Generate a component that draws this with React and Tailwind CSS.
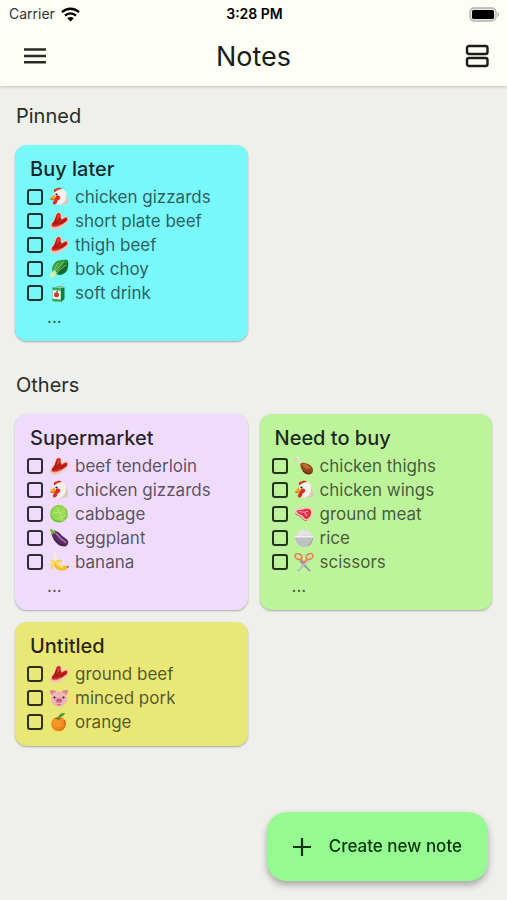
import React from "react";

const meat = (
  <>
    <path d="M1 13.500C3 11 5 9 6 5c.5-2.500 2-4 4-3.800C12.500 1.300 13 3 12.500 5.500L13 7c2-.5 3.500-2.500 5.500-1.500 1.200 1 1 3.500.3 5.500-2 2.500-4.500 3.500-6.500 5.500-2 1.500-5 2.500-8 2.300C2 18 1 16 1 13.500z" fill="#f5c4bb" />
    <path d="M3 12.500C5 10.500 6.300 8 7 5c.5-2 2-3.200 3.500-2.800C12 2.800 11.800 4.500 11.500 6l1 2.500C14.500 8 16 6 17.800 6.500c.8 1 .5 2.500 0 3.500-2 2-4.500 3-6.300 4.500-2 1.200-5 2-7.500 1.300-1-.5-1.500-2-1-3.300z" fill="#c9241a" />
    <path d="M7.500 6c-.3 3-1.500 5-3.500 7.500M11 7.500c-1 2-3 3.500-4.500 5.500M17 8.500c-2 2-4.500 2.500-6.500 4.500" fill="none" stroke="#96150f" strokeWidth="1.100" />
    <path d="M9.500 4c-.2 2-.3 3-1 4.500" fill="none" stroke="#ec5a4a" strokeWidth="1" />
    <path d="M2 15c3 2 7 .5 10-1.500" fill="none" stroke="#ee8578" strokeWidth="1" />
  </>
);

const chicken = (
  <>
    <path d="M5 6.500C5.500 3.500 8 2 11 2c4.500 0 7 3.500 7.500 8 .5 3.500 0 7-2 7.500H7.500C6 15 4.500 10 5 6.500z" fill="#f6f0eb" />
    <path d="M16.500 5.500c2 2.500 3.300 7.500 2.500 10.500-.5 1.500-1.500 1.700-3 1.700h-5C16 16 17.800 11.500 16.500 5.500z" fill="#dccabf" />
    <path d="M5.500 5.500C4 3 5.500 1.500 7.500 1.800 8.500.3 12 .3 13 2c-3 .2-5.500 1.300-7.500 3.500z" fill="#d8301f" />
    <path d="M5 7.500.8 11.500c1 2 4 2 6.700.3z" fill="#eda51d" />
    <path d="M1.500 12c2 .8 4 .5 5.500-.3" fill="none" stroke="#a5650c" strokeWidth=".8" />
    <path d="M7 9c2.500-1.500 5 0 4 2.500-.7 1.500-2.200 1.500-2.700 3-.3 2.500-2.800 4-4.100 2.500-1-1.500.3-3.300 1.600-4.500z" fill="#d93023" />
    <circle cx="7.500" cy="7.500" r="1.100" fill="#33231f" />
  </>
);

const drawings = {
  meat,
  chicken,
  bokChoy: (
    <>
      <path d="M6 4c1-2 3-2.500 5-2.500C13 .5 16 .5 18.500 1c1.200 2 1 4.500.5 7-.3 3-1.500 5.500-4 6.500-2 1.500-4.500 1.500-7 1L3.500 13C3 9.500 4 6 6 4z" fill="#1f8633" />
      <path d="M3 10.500c.5-4 3-8 7-8.500 2-.6 4-.7 5.500-.3L11 9l-5.500 5z" fill="#39a144" />
      <path d="M19 3.500 11.500 10 9 15.500c3 .5 6-.5 7.500-3C18.500 10 19.200 7 19 3.500z" fill="#12672a" />
      <path d="M1 17c0-2 2.500-4 4.500-6L8 14c-2 2.500-4.500 4.500-6 4.500-1 0-1.200-.8-1-1.500z" fill="#e4edaa" />
      <path d="M4 14.500 9 9l6-6.500M5.500 15.500 10.500 11l7-5M4.500 12 9 4" fill="none" stroke="#9bd17a" strokeWidth=".8" />
    </>
  ),
  juice: (
    <>
      <path d="m12 4 1-3.500 2.500-.3" fill="none" stroke="#b7c8c4" strokeWidth="1" />
      <path d="m3.500 4.500 8.500-1.500 3.500 1.500v11.500L12 19l-8.500-1z" fill="#127c3c" />
      <path d="m3.500 4.500 8.300.8v13.500l-8.300-.8z" fill="#eaf5ea" />
      <path d="m3.500 4.500 8.300.8v2.500l-8.300-.8zM3.500 15.700l8.300.8v2.300l-8.300-.8z" fill="#35a45b" />
      <path d="m3.500 4.500 8.500-1.500 3.500 1.500-3.700.8z" fill="#7bd39c" />
      <circle cx="7.500" cy="11.800" r="2.500" fill="#d8322b" />
      <path d="m7.500 9.500.5-1.500 1 .8" fill="none" stroke="#2d7935" strokeWidth="1" />
    </>
  ),
  cabbage: (
    <>
      <path d="M10 1c3 0 4 .8 5.500 2.300C18 5 19 7 18.800 10c.2 3-1 5-3.300 6.500-1.500 1.800-3.500 2.300-6 2-3 0-5-1-6.500-3C1.500 14 1 12 1.300 9.500 1.200 7 2.500 4.500 4.500 3 6 1.500 8 1 10 1z" fill="#83cf42" />
      <path d="M10 2c4 0 7 2.500 7.500 6 0 4-1.500 7-5 8.500-4 .5-8-1-9.500-4.500C2 7 5 2.500 10 2z" fill="#98da52" />
      <path d="M14 17 11 10 8 3.500M11 10l4.500-3.500M10.500 9 4 8M12.500 13.500 6 14.500M12.500 13.500l4-2" fill="none" stroke="#c3ee8d" strokeWidth=".7" />
      <path d="M2 11.500c1.500 4 5 6 9 6M6 11.500l2 2" fill="none" stroke="#62ae35" strokeWidth=".6" />
    </>
  ),
  eggplant: (
    <>
      <path d="M2.500 5c2.500-3 6-2.500 8.500.5 2 2.500 4 3.500 6.500 5.500 3 2.500 2 6.500-1.500 7.500-5 .5-9.500-3.500-11.500-7.500C3.500 9 2 7 2.500 5z" fill="#5b2b65" />
      <path d="M7 5.500C9.500 7.500 10.500 10 13.500 12c1.500.8 2.500 1.500 3 2.500" fill="none" stroke="#b78abb" strokeWidth="1.300" strokeLinecap="round" />
      <path d="M5 10c2 4 6 7 11 7" fill="none" stroke="#351540" strokeWidth="1" />
      <path d="M.8 2 2 .8 4 2.500l3-.3L6 4l.5 2-2.200-.8-.8 2.300L2.500 4.500z" fill="#72ad35" />
    </>
  ),
  banana: (
    <>
      <path d="M6.500 9c1 4 4 5 8 4.800 1.500-.3 3.500-.3 4.500 1 0 2.500-4 4.200-7.500 3.700C7 18 5 14.500 5 10z" fill="#f2bd20" />
      <path d="M7 10c1.500 3.500 4 4.500 7 5" fill="none" stroke="#ffdc58" strokeWidth="2" />
      <path d="M4.500 9.500C4.800 6.500 4.800 3.500 4 1.500 4.200.5 5.500.3 6.500 1.200c1.200 2.500 1.300 5 .5 8.300z" fill="#fbeeb8" />
      <path d="M6 8.500.8 8.300l2 1.500-1.500 7.500 2.500-1L6.500 11M7 8.500l5-1.200 2 3-2-.8-4 1.500" fill="#f5cf43" />
      <path d="m2.800 10 2 .5-2 5" fill="none" stroke="#fff0ac" strokeWidth=".8" />
      <path d="m18 14.300 1.300-.5.2 1.800-1.200.2z" fill="#6b4a1d" />
    </>
  ),
  drumstick: (
    <>
      <path d="m8.500 8.500-5-5" stroke="#eadbd0" strokeWidth="1.800" />
      <circle cx="1.800" cy="3.300" r="1.200" fill="#d9c8bf" />
      <circle cx="3.500" cy="1.800" r="1.200" fill="#f1e4dc" />
      <path d="M6.500 7.500C9 6 11.500 6.800 14 8c4.500 2 6 5.500 4.500 8.500-2 3-7 2.500-9.500-1C7 13 6 10 6.500 7.500z" fill="#94491a" />
      <path d="M8 8c3-.8 7 1.500 8.500 4.200-2 1.300-4.700.5-6.500-1.200C9 10 8.300 9.500 8 8z" fill="#c0702f" />
      <path d="M9 14.500c2 3 6 4 8.500 2" fill="none" stroke="#632b0c" strokeWidth="1.200" />
    </>
  ),
  steak: (
    <>
      <path d="M1 6.500C1.500 4 5 4.500 9 3.500c4-1 8-1 9.500 2 1 3.500-.5 8.500-4 10.500-3 1.500-5.500 0-7-2.500C6 11.500 1 10.500 1 6.500z" fill="#f6c9c4" />
      <path d="M2.500 7c2-1.300 5-.8 8-2 3-.8 5.700-.3 6.500 1.700.7 3-.8 6.500-3.300 8-2 1-3.500-.5-4.800-2.500C7.500 10 3 10 2.500 7z" fill="#e02f42" />
      <path d="m4.500 7.500 6 .8 2.500 3.700M10.500 8.300 14 7" fill="none" stroke="#ff9ba0" strokeWidth="1.200" />
      <path d="M1.200 8.500c1 2.500 4.500 2.500 6 4.500 1.800 2.500 3.500 3.800 6.300 3l-1 1c-3 .2-4.500-2.500-6-4-2-1.500-5.500-1.700-5.300-4.500z" fill="#c14b4c" />
    </>
  ),
  rice: (
    <>
      <path d="M2 8c.5-4 4-6.500 8-6.500S17.500 4 18 8z" fill="#dededf" />
      <path d="M1 8h18c0 4-1.500 7.500-4.500 9.500-1 .8-2 1.500-4.500 1.500s-3.500-.7-4.500-1.500C2.500 15.500 1 12 1 8z" fill="#bfc0c2" />
      <path d="M1 8h18l-.2 1.500H1.200z" fill="#f1f1f1" />
      <path d="M18.300 10c-.3 3.500-2 6-5 8l1 .2c3-1.700 4.500-5 4.600-8.200z" fill="#929496" />
      <path d="m5 5 1-.5M8 3.500l1 .5M11 5.500l1-.5M14 4.500l.8.6M7 6.500h1.200" stroke="#fff" strokeWidth="1" />
    </>
  ),
  scissors: (
    <>
      <path d="M7 8 16.500 19l-1.800-.5L5.500 9.500z" fill="#8d9da5" stroke="#80919a" strokeWidth=".5" />
      <path d="M13 8 3.500 19l1.800-.5 9.200-9z" fill="#c6d0d5" stroke="#8fa0a9" strokeWidth=".5" />
      <ellipse cx="4.500" cy="4.500" rx="3.500" ry="2.700" transform="rotate(25 4.500 4.500)" fill="none" stroke="#ec7758" strokeWidth="1.500" />
      <ellipse cx="15.500" cy="4.500" rx="3.500" ry="2.700" transform="rotate(-25 15.500 4.500)" fill="none" stroke="#ec7758" strokeWidth="1.500" />
      <path d="m7 7 3 4 3-4" fill="none" stroke="#ec7758" strokeWidth="1.600" />
    </>
  ),
  pig: (
    <>
      <path d="M.8 2.500C3 1.500 6 2 7.500 4L4 8C2 7 1 5 .8 2.500zM19.200 2.500C17 1.500 14 2 12.500 4L16 8c2-1 3-3 3.200-5.500z" fill="#d98c98" />
      <path d="M10 3.500c5 0 8 3 8 7.500 0 4.500-3 7.500-8 7.500s-8-3-8-7.500c0-4.500 3-7.500 8-7.500z" fill="#f0b4bb" />
      <ellipse cx="10" cy="12.500" rx="3.500" ry="2.700" fill="#dc8594" />
      <ellipse cx="8.800" cy="12.500" rx=".7" ry="1.100" fill="#7d2c42" />
      <ellipse cx="11.200" cy="12.500" rx=".7" ry="1.100" fill="#7d2c42" />
      <circle cx="5.500" cy="9.500" r="1.100" fill="#2d2020" />
      <circle cx="14.500" cy="9.500" r="1.100" fill="#2d2020" />
      <path d="M8 16.500c1.300.7 2.700.7 4 0" fill="none" stroke="#a94459" strokeWidth=".8" />
    </>
  ),
  orange: (
    <>
      <circle cx="9.500" cy="12" r="7.300" fill="#f08819" />
      <circle cx="8" cy="10.500" r="4.500" fill="#f59728" />
      <path d="M15.500 8c2 5-1 10-6 10.500" fill="none" stroke="#d9650e" strokeWidth="1.200" />
      <path d="M9 5.500C9.500 3 12 .5 16 1c-1 2.800-3.500 4.500-7 4.500z" fill="#4b9b38" />
      <path d="m6.500 6.500 3 .2 2-1.200M9.500 6.700l.5 1.500" stroke="#32702b" strokeWidth="1" fill="none" />
    </>
  ),
};

const pinned = [
  {
    title: "Buy later",
    color: "bg-[#79f8f9]",
    more: true,
    items: [
      ["chicken", "chicken gizzards"],
      ["meat", "short plate beef"],
      ["meat", "thigh beef"],
      ["bokChoy", "bok choy"],
      ["juice", "soft drink"],
    ],
  },
];

const others = [
  {
    title: "Supermarket",
    color: "bg-[#efdcfd]",
    more: true,
    items: [
      ["meat", "beef tenderloin"],
      ["chicken", "chicken gizzards"],
      ["cabbage", "cabbage"],
      ["eggplant", "eggplant"],
      ["banana", "banana"],
    ],
  },
  {
    title: "Need to buy",
    color: "bg-[#bcf39b]",
    more: true,
    items: [
      ["drumstick", "chicken thighs"],
      ["chicken", "chicken wings"],
      ["steak", "ground meat"],
      ["rice", "rice"],
      ["scissors", "scissors"],
    ],
  },
  {
    title: "Untitled",
    color: "bg-[#e9e876]",
    more: false,
    items: [
      ["meat", "ground beef"],
      ["pig", "minced pork"],
      ["orange", "orange"],
    ],
  },
];

function StatusBar() {
  return (
    <div className="grid grid-cols-3 items-center h-7 pl-[9px] pr-[7px] text-[14px] leading-5 text-black">
      <div className="flex items-center gap-[6px]">
        <span className="text-[#333]">Carrier</span>
        <svg width="19" height="15" viewBox="0 0 19 15" fill="none" stroke="#000" strokeWidth="2.400">
          <path d="M1 5.200c4.800-4.600 12.200-4.600 17 0M4 8.600c3.200-3 7.800-3 11 0" />
          <path d="M6.300 11.200c1.900-1.700 4.500-1.700 6.400 0L9.500 14.500z" fill="#000" stroke="none" />
        </svg>
      </div>
      <span className="text-center font-semibold">3:28 PM</span>
      <svg className="justify-self-end" width="31" height="15" viewBox="0 0 31 15">
        <rect x="1" y="1" width="26" height="13" rx="4" fill="#e8e8e2" stroke="#b2b3ad" strokeWidth="1.300" />
        <rect x="3" y="3" width="22" height="9" rx="1.500" fill="#000" />
        <path d="M28.500 5c2 .8 2 4.200 0 5z" fill="#b2b3ad" />
      </svg>
    </div>
  );
}

function Header() {
  return (
    <header className="sticky top-0 z-10 bg-[#fdfef6] shadow-[0_1px_3px_rgba(0,0,0,0.2)]">
      <StatusBar />
      <div className="flex items-center justify-between h-[58px] px-[18px]">
        <button aria-label="Open menu" className="flex items-center justify-center w-[34px] h-9">
          <svg width="24" height="20" viewBox="0 0 24 20" stroke="#2a2b28" strokeWidth="2.400">
            <path d="M1 2.500h22M1 9h22M1 15.200h22" />
          </svg>
        </button>
        <h1 className="text-[27px] leading-8 text-[#1b1c19]">Notes</h1>
        <button aria-label="Change layout" className="flex items-center justify-end w-[34px] h-9">
          <svg width="24" height="26" viewBox="0 0 24 26" fill="none" stroke="#1b1c19" strokeWidth="2.400">
            <rect x="2" y="2" width="20.500" height="8" rx="2" />
            <rect x="2" y="14" width="20.500" height="8" rx="2" />
          </svg>
        </button>
      </div>
    </header>
  );
}

function NoteCard({ note }) {
  return (
    <article className={`${note.color} rounded-xl pt-[10px] px-3 pb-3 shadow-[0_1px_2px_rgba(0,0,0,0.3)]`}>
      <h3 className="pl-[3px] text-[20px] leading-7 font-medium text-black/85">{note.title}</h3>
      <ul className="pt-[2px]">
        {note.items.map(([icon, text]) => (
          <li key={text}>
            <label className="flex items-center h-6 text-[17px] leading-6 text-black/65">
              <input
                type="checkbox"
                className="appearance-none shrink-0 w-4 h-4 border-2 border-black/80 rounded-[3px] checked:bg-black/80"
              />
              <svg className="shrink-0 ml-[6px] mr-[6px]" width="20" height="20" viewBox="0 0 20 20">
                {drawings[icon]}
              </svg>
              <span className="truncate">{text}</span>
            </label>
          </li>
        ))}
      </ul>
      {note.more && <p className="pl-5 text-[17px] leading-6 text-black/65">...</p>}
    </article>
  );
}

function Section({ title, notes }) {
  return (
    <section>
      <h2 className="mb-[15px] pl-px text-[20px] leading-7 text-[#2b2c29]">{title}</h2>
      <div className="grid grid-cols-2 items-start gap-3">
        {notes.map((note) => (
          <NoteCard key={note.title} note={note} />
        ))}
      </div>
    </section>
  );
}

export default function App() {
  return (
    <div className="min-h-screen bg-[#efefeb] font-['Inter',sans-serif]">
      <Header />
      <main className="flex flex-col gap-[30px] px-[15px] pt-4 pb-28">
        <Section title="Pinned" notes={pinned} />
        <Section title="Others" notes={others} />
      </main>

      {/* Floating action button */}
      <button className="fixed right-[19px] bottom-[19px] flex items-center gap-[18px] h-[69px] pl-[26px] pr-[26px] rounded-[20px] bg-[#95fa91] text-[17px] font-medium text-[#0b3309] shadow-[0_4px_7px_rgba(0,0,0,0.3)]">
        <svg width="18" height="18" viewBox="0 0 18 18" stroke="currentColor" strokeWidth="2.200">
          <path d="M9 0v18M0 9h18" />
        </svg>
        Create new note
      </button>
    </div>
  );
}
